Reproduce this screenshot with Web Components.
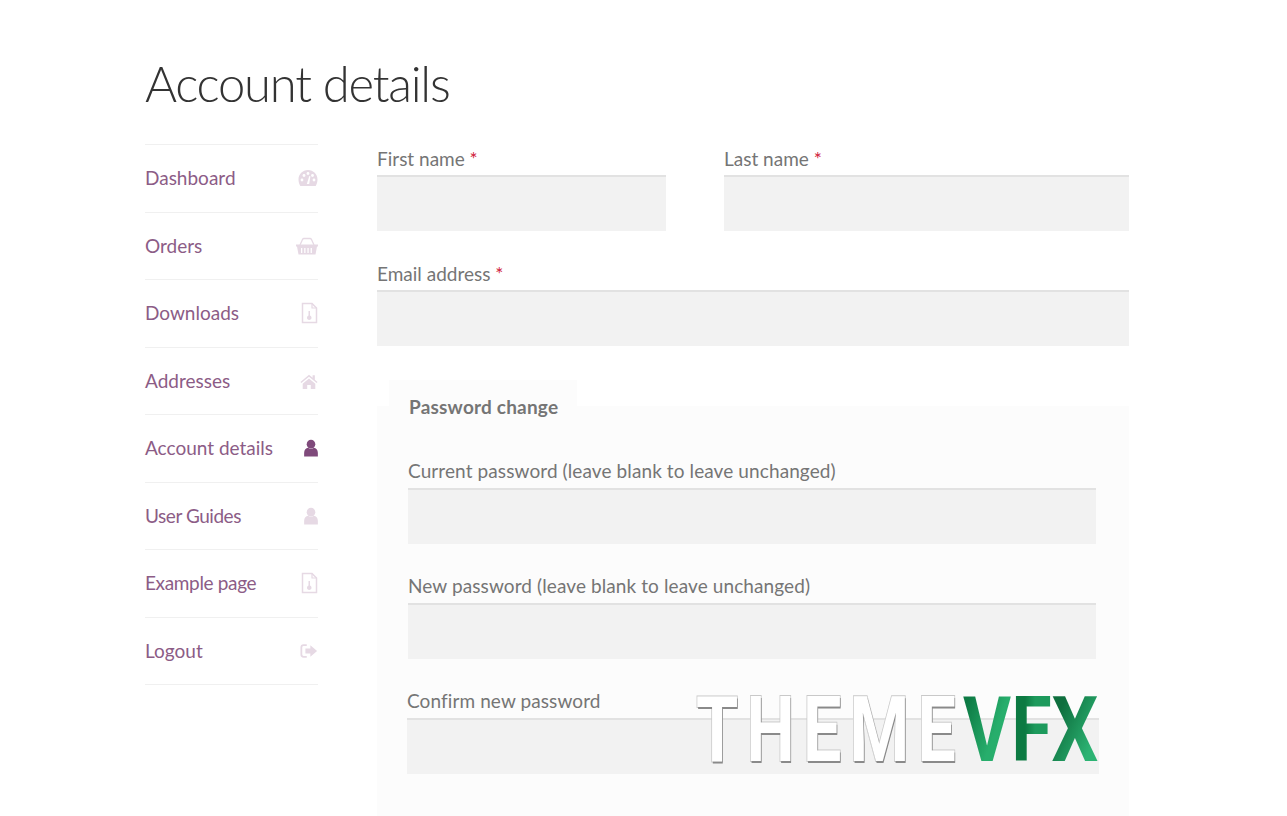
<!DOCTYPE html>
<html lang="en">
<head>
<meta charset="utf-8">
<title>Account details</title>
<style>
    html, body {
        margin: 0;
        height: 816px;
        overflow: hidden;
        background: #fff;
        font-family: "Lato", "Liberation Sans", sans-serif;
    }
</style>
</head>
<body>
<account-page>
    <account-nav slot="nav">
        <nav-item icon="gauge">Dashboard</nav-item>
        <nav-item icon="basket">Orders</nav-item>
        <nav-item icon="file">Downloads</nav-item>
        <nav-item icon="home">Addresses</nav-item>
        <nav-item icon="user" active>Account details</nav-item>
        <nav-item icon="user" style="letter-spacing:-.45px">User Guides</nav-item>
        <nav-item icon="file" style="letter-spacing:-.35px">Example page</nav-item>
        <nav-item icon="logout">Logout</nav-item>
    </account-nav>
    <div slot="form">
        <field-row>
            <form-field label="First name" required></form-field>
            <form-field label="Last name" required></form-field>
        </field-row>
        <form-field label="Email address" required></form-field>
        <password-box legend="Password change">
            <form-field label="Current password (leave blank to leave unchanged)" style="width:688px"></form-field>
            <form-field label="New password (leave blank to leave unchanged)" style="width:688px"></form-field>
            <form-field label="Confirm new password" style="width:692px;margin-left:-1px;margin-top:1px"></form-field>
        </password-box>
    </div>
</account-page>
<vfx-mark></vfx-mark>

<script>
const icons = {
    gauge: `<path d="M10 1C4.600 1 .5 5.300 .5 10.500c0 2.500.7 4.800 1.800 6.500h15.400c1.100-1.700 1.800-4 1.800-6.500C19.500 5.300 15.400 1 10 1z"/><g fill="#fff"><circle cx="4" cy="11" r="1.400"/><circle cx="6" cy="6.500" r="1.400"/><circle cx="10" cy="4.500" r="1.400"/><circle cx="14.500" cy="6.500" r="1.400"/><circle cx="16" cy="11" r="1.400"/><path d="M8.800 15l2.500-8 1.100.3L11.200 15z"/></g>`,
    basket: `<path d="M4 9L6.500 3.500Q7 2.500 8 2.500H14Q15 2.500 15.500 3.500L18 9" fill="none" stroke="currentColor" stroke-width="1.300"/><path d="M0 8.500h22v2h-1L19.500 18.500H2.500L1 10.500H0z"/><g fill="#fff"><rect x="5" y="12" width="1.300" height="5"/><rect x="8.200" y="12" width="1.300" height="5"/><rect x="11.400" y="12" width="1.300" height="5"/><rect x="14.600" y="12" width="1.300" height="5"/></g>`,
    file: `<path d="M1.500 1.500H11L15.500 6V20.500H1.500Z" fill="none" stroke="currentColor" stroke-width="1.500"/><path d="M11 1.500V6H15.500" fill="none" stroke="currentColor" stroke-width="1.200"/><path d="M7.500 9h1.500v4.500c1.200.6 1.500 1.500 1.500 2.300 0 1.300-1 2.200-2.300 2.200S6 17.100 6 15.800c0-.8.400-1.700 1.500-2.300z"/>`,
    home: `<path d="M10 3L.5 11l1 1.200L10 5.200l8.500 7 1-1.200-3-2.500V3.500h-2.500v2.800z"/><path d="M3 13l7-5.800L17 13v6h-5v-4.500H8V19H3z"/>`,
    user: `<circle cx="8" cy="6" r="5"/><path d="M0 20.500v-4.500c0-3.500 2.200-5.500 4.500-5.800 1 .8 2.200 1.300 3.500 1.300s2.500-.5 3.500-1.300c2.300.3 4.500 2.300 4.500 5.800v4.500z"/>`,
    logout: `<path d="M7 3.500H3.500Q1 3.500 1 6V14Q1 16.500 3.500 16.500H7" fill="none" stroke="currentColor" stroke-width="2"/><path d="M11 3.500l7.500 6.500-7.500 6.500v-3.800H5.500V7.300H11z"/>`
};

const boxes = { gauge: "0 0 20 18", basket: "0 0 22 20", file: "0 0 17 22", home: "0 0 20 20", user: "0 0 16 21", logout: "0 0 19 20" };
const sizes = { gauge: [20, 18], basket: [22, 20], file: [17, 22], home: [18, 18], user: [14, 18], logout: [18, 18] };

class AccountPage extends HTMLElement {
    constructor () {
        super ();
        this.attachShadow ({mode: 'open'});
        this.shadowRoot.innerHTML = `
<style>
    :host {
        display: block;
        padding: 52px 158px 0 145px;
        color: #757575;
    }
    h1 {
        margin: 0 0 30px;
        font-size: 49px;
        font-weight: 300;
        letter-spacing: -1.25px;
        line-height: 62px;
        color: #333;
    }
    #columns {
        display: grid;
        grid-template-columns: 173px 752px;
        column-gap: 59px;
    }
</style>
<h1>Account details</h1>
<div id="columns">
    <slot name="nav"></slot>
    <slot name="form"></slot>
</div>`;
    }
}

class AccountNav extends HTMLElement {
    constructor () {
        super ();
        this.attachShadow ({mode: 'open'});
        this.shadowRoot.innerHTML = `
<style>
    :host {
        display: block;
        border-top: 1px solid #f0f0f0;
    }
</style>
<slot></slot>`;
    }
}

class NavItem extends HTMLElement {
    constructor () {
        super ();
        this.attachShadow ({mode: 'open'});
        const name = this.getAttribute ("icon");
        const [w, h] = sizes[name];
        this.shadowRoot.innerHTML = `
<style>
    :host {
        display: flex;
        align-items: center;
        justify-content: space-between;
        height: 65.5px;
        padding-bottom: 1px;
        border-bottom: 1px solid #f0f0f0;
        font-size: 19px;
        color: #8c5c86;
    }
    svg {
        fill: currentColor;
        color: #e6d9e4;
        display: block;
        margin-top: 1px;
    }
    :host([active]) svg {
        color: #7f4a7b;
    }
</style>
<slot></slot>
<svg width="${w}" height="${h}" viewBox="${boxes[name]}">${icons[name]}</svg>`;
    }
}

class FieldRow extends HTMLElement {
    constructor () {
        super ();
        this.attachShadow ({mode: 'open'});
        this.shadowRoot.innerHTML = `
<style>
    :host {
        display: grid;
        grid-template-columns: 289px 405px;
        column-gap: 58px;
    }
</style>
<slot></slot>`;
    }
}

class FormField extends HTMLElement {
    constructor () {
        super ();
        this.attachShadow ({mode: 'open'});
        const star = this.hasAttribute ("required") ? ` <span>*</span>` : "";
        this.shadowRoot.innerHTML = `
<style>
    :host {
        display: block;
        margin-bottom: 28px;
        font-size: 19px;
        letter-spacing: var(--label-spacing, 0);
    }
    label {
        display: block;
        height: 31px;
        line-height: var(--label-height, 30px);
    }
    span {
        color: #d0213a;
    }
    input {
        display: block;
        box-sizing: border-box;
        width: 100%;
        height: 56px;
        margin: 0;
        padding: 0;
        border: 0;
        border-top: 2px solid #e2e2e2;
        background: #f2f2f2;
        outline: none;
    }
</style>
<label>${this.getAttribute ("label")}${star}</label>
<input type="text">`;
    }
}

class PasswordBox extends HTMLElement {
    constructor () {
        super ();
        this.attachShadow ({mode: 'open'});
        this.shadowRoot.innerHTML = `
<style>
    :host {
        display: block;
        position: relative;
        margin-top: 60px;
        padding: 51px 31px 60px;
        background: #fcfcfc;
        --label-height: 28px;
        --label-spacing: .1px;
    }
    #legend {
        position: absolute;
        left: 12px;
        top: -26px;
        box-sizing: border-box;
        width: 188px;
        height: 26px;
        padding: 0 20px;
        background: #fcfcfc;
        font-size: 19px;
        letter-spacing: .2px;
        line-height: 8px;
        white-space: nowrap;
    }
    #legend b {
        position: relative;
        top: 23px;
        font-weight: 700;
    }
</style>
<div id="legend"><b>${this.getAttribute ("legend")}</b></div>
<slot></slot>`;
    }
}

class VfxMark extends HTMLElement {
    constructor () {
        super ();
        this.attachShadow ({mode: 'open'});
        this.shadowRoot.innerHTML = `
<style>
    :host {
        display: block;
        position: absolute;
        left: 696px;
        top: 690px;
        width: 405px;
        height: 80px;
        font-family: "Roboto", "Liberation Sans", sans-serif;
        font-size: 91px;
        font-weight: 700;
        line-height: 80px;
        white-space: nowrap;
    }
    div {
        position: absolute;
        top: 0;
        transform-origin: left center;
    }
    #theme {
        left: 0;
        letter-spacing: 11px;
        transform: scaleX(.75);
        color: #fff;
        -webkit-text-stroke: 2px #c9c9c9;
        paint-order: stroke fill;
        text-shadow: 1px 2px 0 #8a8a8a;
    }
    #vfx {
        left: 267px;
        transform: scaleX(.81);
    }
    span {
        -webkit-background-clip: text;
        background-clip: text;
        color: transparent;
    }
    #v { background-image: linear-gradient(115deg, #0d7a44 15%, #27ae6c 60%); }
    #f { background-image: linear-gradient(90deg, #0c7a42 35%, #1d9a5c 60%); }
    #x { background-image: linear-gradient(120deg, #0e6f3e 25%, #2cb373 75%); }
</style>
<div id="theme">THEME</div>
<div id="vfx"><span id="v">V</span><span id="f">F</span><span id="x">X</span></div>`;
    }
}

customElements.define ("account-page", AccountPage);
customElements.define ("account-nav", AccountNav);
customElements.define ("nav-item", NavItem);
customElements.define ("field-row", FieldRow);
customElements.define ("form-field", FormField);
customElements.define ("password-box", PasswordBox);
customElements.define ("vfx-mark", VfxMark);
</script>
</body>
</html>
